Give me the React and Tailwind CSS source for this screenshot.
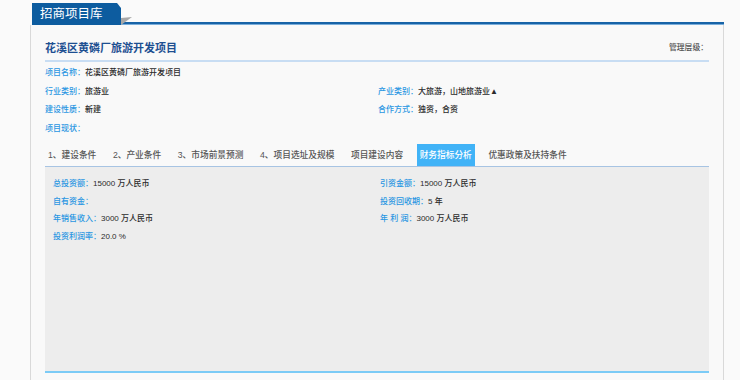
import React from 'react';

const font = { fontFamily: '"Liberation Sans", "Noto Sans CJK SC", sans-serif' };

function Field({ label, value, className = '' }) {
  return (
    <div className={`whitespace-nowrap font-medium ${className}`}>
      <span className="text-[#2a96e2]">{label}</span>
      <span className="text-[#2b2b2b]">{value}</span>
    </div>
  );
}

const tabs = [
  '1、建设条件',
  '2、产业条件',
  '3、市场前景预测',
  '4、项目选址及规模',
  '项目建设内容',
  '财务指标分析',
  '优惠政策及扶持条件',
];

export default function App() {
  return (
    <div
      className="h-[380px] overflow-hidden bg-[#fafafa] pt-[3px] pl-[30px] pr-[16px]"
      style={font}
    >
      {/* header tab + blue rule */}
      <div className="relative flex items-end h-[22px]">
        <div className="ml-[2px] w-[89px] h-[22px] bg-[#0d5c9f] text-white text-[12.5px] leading-[22px] pl-[8px] [clip-path:polygon(0_0,85px_0,89px_5px,89px_100%,0_100%)]">
          招商项目库
        </div>
        <div className="flex-1 h-[3px] border-t-2 border-[#1763a7] border-b border-b-[#7aaedb]" />
        <svg className="absolute left-[91px] top-[14px]" width="11" height="8" viewBox="0 0 11 8">
          <polygon points="0,1 11,0 0,8" fill="#a8a8a8" />
        </svg>
      </div>

      {/* panel */}
      <div className="h-[355px] border-l border-r border-[#d9d9d9] bg-[#f9f9f9] px-[14px]">
        <div className="flex items-center justify-between pt-[17px] h-[29px]">
          <div className="text-[11px] leading-[12px] font-bold text-[#1d4f91]">花溪区黄磷厂旅游开发项目</div>
          <div className="text-[7.8px] leading-[12px] text-[#555] font-medium pr-[1px]">管理层级：</div>
        </div>
        <div className="mt-[6px] h-[2px] bg-[#c8ddf3]" />

        <div className="mt-[2px] text-[8px]">
          <div className="h-[18.6px] flex items-center">
            <Field label="项目名称：" value="花溪区黄磷厂旅游开发项目" />
          </div>
          <div className="h-[18.6px] grid grid-cols-[333px_1fr] items-center">
            <Field label="行业类别：" value="旅游业" />
            <Field label="产业类别：" value="大旅游，山地旅游业▲" />
          </div>
          <div className="h-[18.6px] grid grid-cols-[333px_1fr] items-center">
            <Field label="建设性质：" value="新建" />
            <Field label="合作方式：" value="独资，合资" />
          </div>
          <div className="h-[18.6px] flex items-center">
            <Field label="项目现状：" value="" />
          </div>
        </div>

        {/* tabs */}
        <div className="mt-[6px] flex h-[22px] gap-[10.6px] text-[8.7px] font-medium">
          {tabs.map((t, i) =>
            i === 5 ? (
              <div key={t} className="px-[3px] leading-[22px] bg-[#41b3f7] text-white">
                {t}
              </div>
            ) : (
              <div key={t} className="px-[3px] leading-[22px] text-[#555]">
                {t}
              </div>
            )
          )}
        </div>

        {/* finance box */}
        <div className="h-[207px] border-t border-[#a7c4e3] border-b-2 border-b-[#7ccbf6] bg-[#ededed] pt-[8px] pl-[8px] text-[8px]">
          <div className="h-[17.6px] grid grid-cols-[327px_1fr] items-center">
            <Field label="总投资额：" value="15000 万人民币" />
            <Field label="引资金额：" value="15000 万人民币" />
          </div>
          <div className="h-[17.6px] grid grid-cols-[327px_1fr] items-center">
            <Field label="自有资金：" value="" />
            <Field label="投资回收期：" value="5 年" />
          </div>
          <div className="h-[17.6px] grid grid-cols-[327px_1fr] items-center">
            <Field label="年销售收入：" value="3000 万人民币" />
            <Field label="年 利 润：" value="3000 万人民币" />
          </div>
          <div className="h-[17.6px] flex items-center">
            <Field label="投资利润率：" value="20.0 %" />
          </div>
        </div>
      </div>
    </div>
  );
}
